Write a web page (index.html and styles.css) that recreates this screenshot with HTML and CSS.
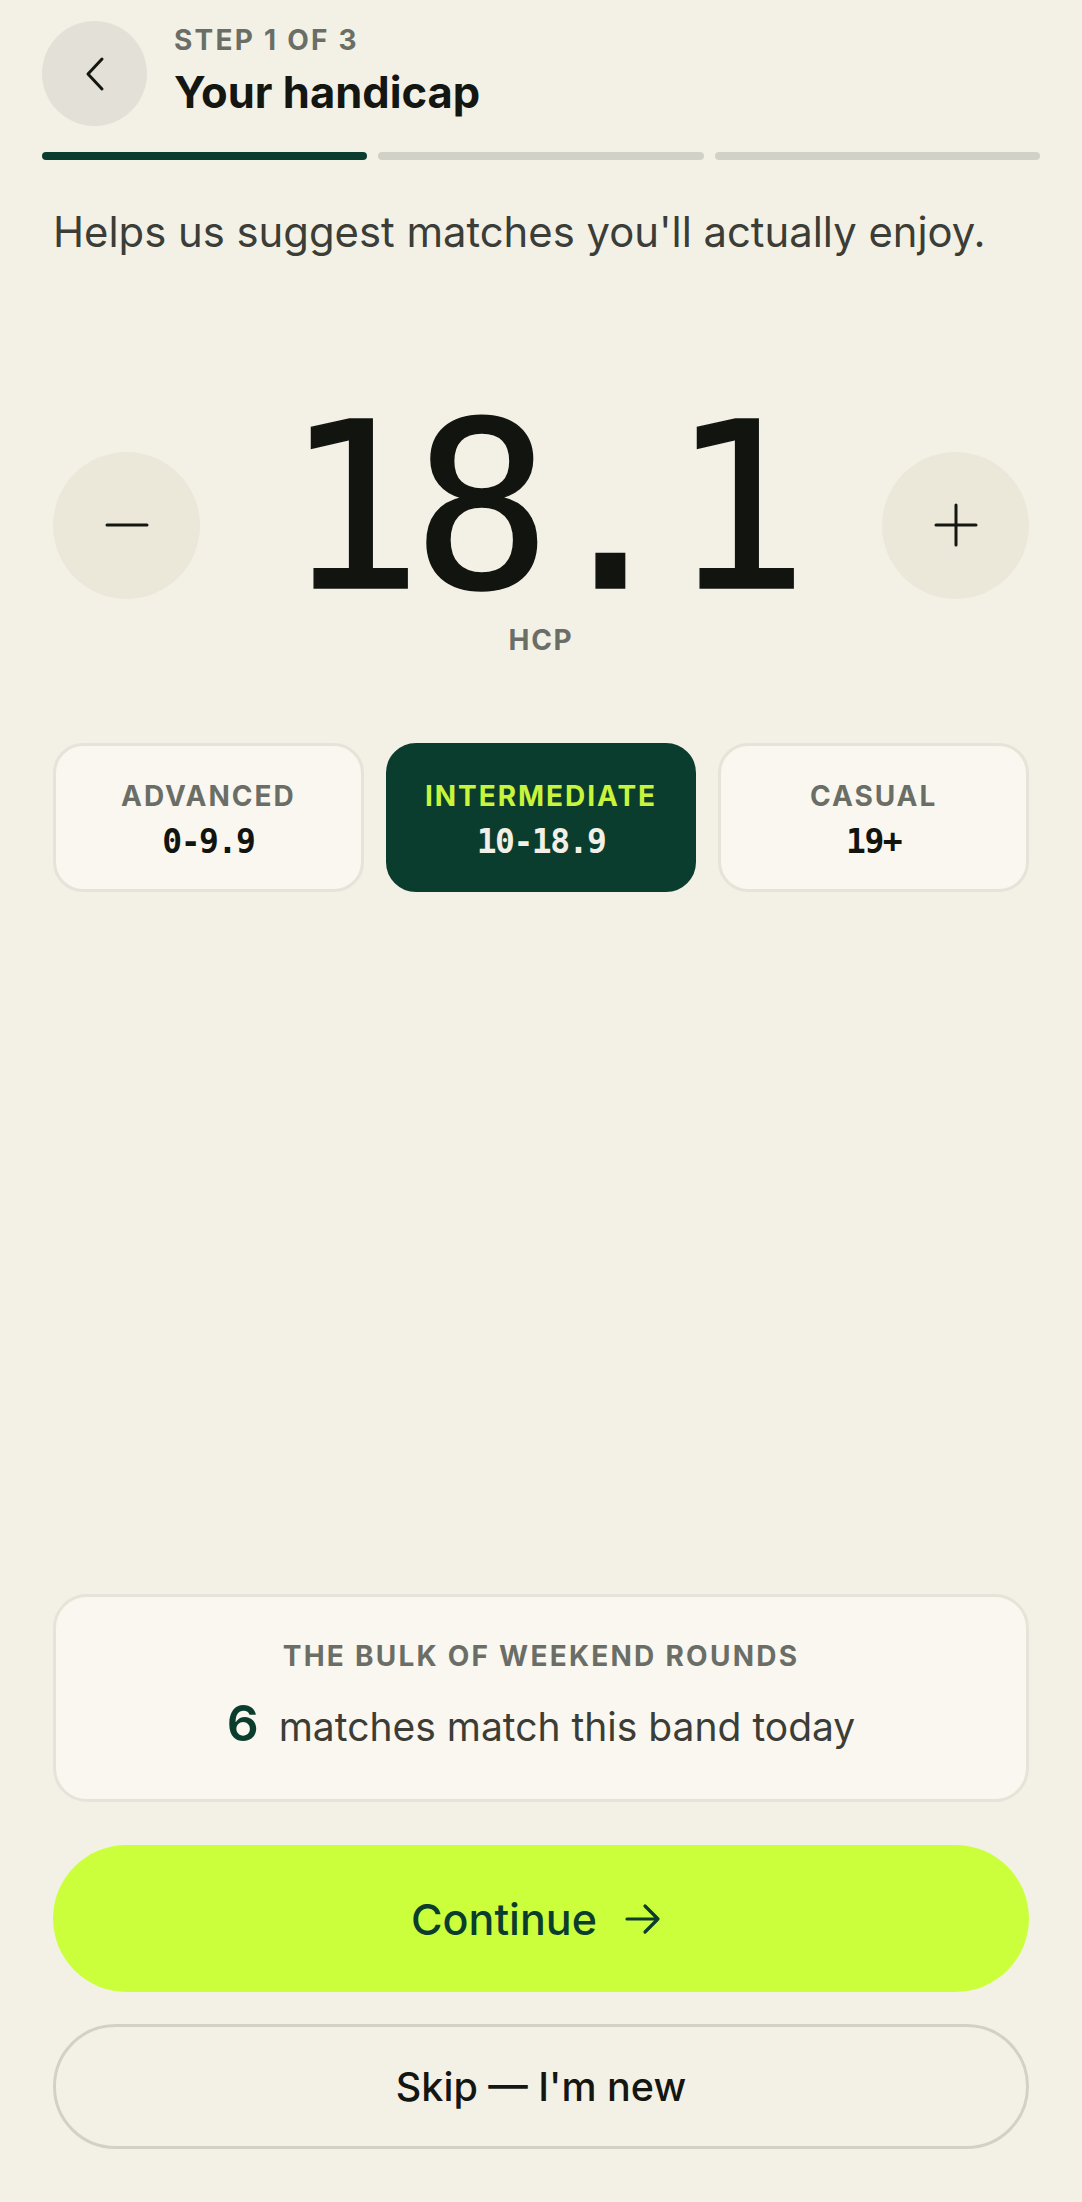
FILE: index.html
```html
<!DOCTYPE html>
<html lang="en">
<head>
  <meta charset="UTF-8" />
  <meta name="viewport" content="width=device-width, initial-scale=1.0"/>
  <title>Your handicap</title>
  <link rel="stylesheet" href="styles.css">
</head>
<body>
  <div class="screen">
    <div class="header">
      <button class="back" aria-label="Back">
        <svg width="22" height="38" viewBox="0 0 22 38" fill="none">
          <path d="M18 4 L4 19 L18 34" stroke="#141612" stroke-width="3" stroke-linecap="round" stroke-linejoin="round"/>
        </svg>
      </button>
      <div class="titles">
        <div class="step">STEP 1 OF 3</div>
        <h1>Your handicap</h1>
      </div>
    </div>

    <div class="progress">
      <span class="seg done"></span>
      <span class="seg"></span>
      <span class="seg"></span>
    </div>

    <div class="content">
      <p class="lead">Helps us suggest matches you'll actually enjoy.</p>

      <div class="stepper">
        <button class="round" aria-label="Decrease">
          <svg width="44" height="44" viewBox="0 0 44 44"><path d="M2 22 H42" stroke="#141612" stroke-width="3" stroke-linecap="round"/></svg>
        </button>
        <div class="value">
          <div class="number">18.1</div>
          <div class="unit">HCP</div>
        </div>
        <button class="round" aria-label="Increase">
          <svg width="44" height="44" viewBox="0 0 44 44"><path d="M2 22 H42 M22 2 V42" stroke="#141612" stroke-width="3" stroke-linecap="round"/></svg>
        </button>
      </div>

      <div class="bands">
        <div class="band">
          <div class="band-name">ADVANCED</div>
          <div class="band-range">0-9.9</div>
        </div>
        <div class="band active">
          <div class="band-name">INTERMEDIATE</div>
          <div class="band-range">10-18.9</div>
        </div>
        <div class="band">
          <div class="band-name">CASUAL</div>
          <div class="band-range">19+</div>
        </div>
      </div>

      <div class="spacer"></div>

      <div class="summary">
        <div class="summary-label">THE BULK OF WEEKEND ROUNDS</div>
        <div class="summary-line">
          <span class="count">6</span>
          <span>matches match this band today</span>
        </div>
      </div>

      <button class="primary">
        Continue
        <svg width="36" height="32" viewBox="0 0 36 32" fill="none">
          <path d="M2 16 H33 M20 3 L33 16 L20 29" stroke="#0b3d2e" stroke-width="3.2" stroke-linecap="round" stroke-linejoin="round"/>
        </svg>
      </button>
      <button class="secondary">Skip — I'm new</button>
    </div>
  </div>
</body>
</html>
```

FILE: styles.css
```css
* {
  box-sizing: border-box;
  margin: 0;
  padding: 0;
}

body {
  font-family: 'Inter', 'Noto Sans', sans-serif;
  background: #f3f1e6;
  color: #141612;
}

button {
  font-family: inherit;
  border: none;
  cursor: pointer;
}

.screen {
  min-height: 2202px;
  display: flex;
  flex-direction: column;
  padding: 21px 0 53px;
}

.header {
  display: flex;
  align-items: center;
  gap: 27px;
  padding: 0 42px;
}

.back {
  width: 105px;
  height: 105px;
  border-radius: 50%;
  background: #e2e0d7;
  display: flex;
  align-items: center;
  justify-content: center;
}

.titles {
  margin-top: -5px;
}

.step {
  font-size: 28px;
  font-weight: 700;
  letter-spacing: 0.08em;
  color: #6b6e66;
  line-height: 34px;
}

h1 {
  font-size: 43.5px;
  font-weight: 700;
  line-height: 54px;
  color: #141612;
  margin-top: 8px;
}

.progress {
  display: flex;
  gap: 11px;
  padding: 0 42px;
  margin-top: 26px;
}

.seg {
  flex: 1;
  height: 8px;
  border-radius: 4px;
  background: #d2d1c7;
}

.seg.done {
  background: #0b3d2e;
}

.content {
  flex: 1;
  display: flex;
  flex-direction: column;
  padding: 0 53px;
}

.lead {
  margin-top: 44px;
  font-size: 41.8px;
  line-height: 57px;
  color: #3b3d36;
}

.stepper {
  margin-top: 132px;
  display: flex;
  align-items: center;
  justify-content: space-between;
}

.round {
  width: 147px;
  height: 147px;
  border-radius: 50%;
  background: #ebe8da;
  display: flex;
  align-items: center;
  justify-content: center;
}

.value {
  display: flex;
  flex-direction: column;
  align-items: center;
}

.number {
  font-family: 'DejaVu Sans Mono', monospace;
  font-size: 231px;
  line-height: 190px;
  padding-top: 20px;
  letter-spacing: -0.045em;
  color: #121410;
  -webkit-text-stroke: 1.5px #121410;
}

.unit {
  margin-top: 20px;
  font-size: 28px;
  line-height: 34px;
  font-weight: 700;
  letter-spacing: 0.06em;
  color: #6b6e66;
}

.bands {
  margin-top: 86px;
  display: grid;
  grid-template-columns: repeat(3, 1fr);
  gap: 22px;
}

.band {
  height: 149px;
  padding-top: 5px;
  border-radius: 30px;
  background: #f9f7ef;
  border: 3px solid #e6e3d8;
  display: flex;
  flex-direction: column;
  align-items: center;
  justify-content: center;
  gap: 9px;
}

.band.active {
  background: #0b3d2e;
  border-color: #0b3d2e;
}

.band-name {
  font-size: 28px;
  line-height: 34px;
  font-weight: 700;
  letter-spacing: 0.07em;
  color: #6b6e66;
}

.band-range {
  font-family: 'DejaVu Sans Mono', monospace;
  font-size: 33px;
  line-height: 40px;
  font-weight: 700;
  letter-spacing: -0.045em;
  color: #121410;
}

.active .band-name {
  color: #c8f53c;
}

.active .band-range {
  color: #f2f0e6;
}

.spacer {
  flex: 1;
}

.summary {
  height: 208px;
  border-radius: 34px;
  background: #f9f7ef;
  border: 3px solid #e6e3d8;
  display: flex;
  flex-direction: column;
  align-items: center;
  justify-content: center;
  gap: 19px;
}

.summary-label {
  font-size: 28px;
  line-height: 34px;
  font-weight: 700;
  letter-spacing: 0.08em;
  color: #6b6e66;
}

.summary-line {
  display: flex;
  align-items: baseline;
  gap: 20px;
  font-size: 39px;
  line-height: 62px;
  color: #3b3d36;
}

.count {
  font-size: 50px;
  font-weight: 600;
  color: #0b3d2e;
}

.primary {
  margin-top: 43px;
  height: 147px;
  padding-right: 10px;
  border-radius: 74px;
  background: #ccff3b;
  color: #0b3d2e;
  font-size: 43px;
  font-weight: 500;
  display: flex;
  align-items: center;
  justify-content: center;
  gap: 28px;
}

.secondary {
  margin-top: 32px;
  height: 125px;
  border-radius: 63px;
  background: transparent;
  border: 3px solid #d3d1c6;
  color: #141612;
  font-size: 39.5px;
  font-weight: 500;
}
```
